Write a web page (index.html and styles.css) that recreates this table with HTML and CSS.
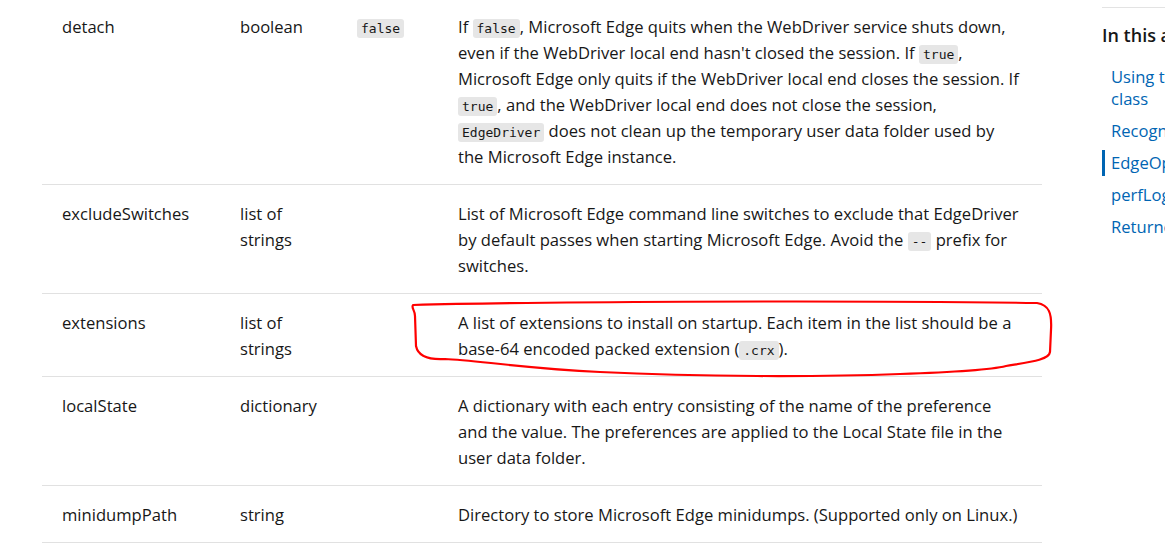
FILE: index.html
```html
<!DOCTYPE html>
<html lang="en">
<head>
<meta charset="utf-8">
<title>EdgeOptions object</title>
<link rel="stylesheet" href="styles.css">
</head>
<body>
<div class="page">
  <main class="content">
    <table class="caps">
      <colgroup>
        <col class="c-name"><col class="c-type"><col class="c-default"><col class="c-desc">
      </colgroup>
      <tbody>
        <tr>
          <td>detach</td>
          <td>boolean</td>
          <td><code>false</code></td>
          <td>If <code>false</code>, Microsoft Edge quits when the WebDriver service shuts down, even if the WebDriver local end hasn't closed the session. If <code>true</code>, Microsoft Edge only quits if the WebDriver local end closes the session. If <code>true</code>, and the WebDriver local end does not close the session, <code>EdgeDriver</code> does not clean up the temporary user data folder used by the Microsoft Edge instance.</td>
        </tr>
        <tr>
          <td>excludeSwitches</td>
          <td>list of strings</td>
          <td></td>
          <td>List of Microsoft Edge command line switches to exclude that EdgeDriver by default passes when starting Microsoft Edge. Avoid the <code>--</code> prefix for switches.</td>
        </tr>
        <tr>
          <td>extensions</td>
          <td>list of strings</td>
          <td></td>
          <td>A list of extensions to install on startup. Each item in the list should be a base-64 encoded packed extension (<code>.crx</code>).</td>
        </tr>
        <tr>
          <td>localState</td>
          <td>dictionary</td>
          <td></td>
          <td>A dictionary with each entry consisting of the name of the preference and the value. The preferences are applied to the Local State file in the user data folder.</td>
        </tr>
        <tr>
          <td>minidumpPath</td>
          <td>string</td>
          <td></td>
          <td>Directory to store Microsoft Edge minidumps. (Supported only on Linux.)</td>
        </tr>
      </tbody>
    </table>
  </main>
  <aside class="toc">
    <h3 class="toc-title">In this article</h3>
    <ul class="toc-list">
      <li><a href="#">Using the EdgeOptions<br>class</a></li>
      <li><a href="#">Recognized capabilities</a></li>
      <li class="active"><a href="#">EdgeOptions object</a></li>
      <li><a href="#">perfLoggingPrefs dictionary</a></li>
      <li><a href="#">Returned capabilities</a></li>
    </ul>
  </aside>
</div>
<svg class="annotation" width="1165" height="551" viewBox="0 0 1165 551" aria-hidden="true">
  <path d="M413 305 C520 302 820 300 1037 303 C1049 305 1052 313 1051 330 L1050 352 C1049 360 1030 362 1006 366 C990 370 962 372 900 374 C820 377 700 377 600 372 C520 368 475 360 445 359 C428 360 418 356 416 346 L415 316 C415 310 411 308 413 305 Z" fill="none" stroke="#ff0000" stroke-width="2.2" stroke-linejoin="round"/>
</svg>
</body>
</html>
```

FILE: styles.css
```css
html, body {
  margin: 0;
  padding: 0;
  background: #ffffff;
}

body {
  width: 1165px;
  height: 551px;
  overflow: hidden;
  position: relative;
  font-family: "Open Sans", "Noto Sans", sans-serif;
  color: #171717;
}

.page {
  display: flex;
  align-items: flex-start;
}

.content {
  margin-left: 42px;
  margin-top: -2px;
  width: 1000px;
  flex: none;
}

.caps {
  width: 1000px;
  border-collapse: collapse;
  table-layout: fixed;
  font-size: 16.6px;
  line-height: 26px;
}

.c-name { width: 178px; }
.c-type { width: 117px; }
.c-default { width: 101px; }
.c-desc { width: 604px; }

.caps td {
  vertical-align: top;
  padding: 16px 20px 14px 20px;
  border-bottom: 1px solid #e1e1e1;
}

.caps code {
  font-family: "DejaVu Sans Mono", "Liberation Mono", monospace;
  font-size: 13px;
  line-height: 1;
  background: #e6e6e6;
  border-radius: 3px;
  padding: 2px 4px;
  color: #171717;
}

.toc {
  margin-left: 60px;
  width: 260px;
  flex: none;
  margin-top: 7px;
  border-top: 1px solid #e3e3e3;
}

.toc-title {
  margin: 14px 0 0 0;
  font-size: 18px;
  line-height: 26px;
  font-weight: 600;
  color: #171717;
  white-space: nowrap;
}

.toc-list {
  list-style: none;
  margin: 16px 0 0 0;
  padding: 0;
}

.toc-list li {
  padding: 2px 0 2px 6px;
  margin-bottom: 6px;
  font-size: 16.6px;
  line-height: 22px;
  white-space: nowrap;
  border-left: 3px solid transparent;
}

.toc-list li.active {
  border-left-color: #0065b3;
}

.toc-list a {
  color: #0065b3;
  text-decoration: none;
}

.annotation {
  position: absolute;
  left: 0;
  top: 0;
  pointer-events: none;
}
```
